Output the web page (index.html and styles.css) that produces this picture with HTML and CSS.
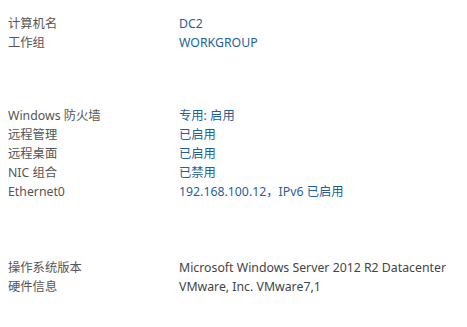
FILE: index.html
```html
<!DOCTYPE html>
<html lang="zh-CN">
  <head>
    <meta charset="UTF-8" />
    <title>属性</title>
    <link rel="stylesheet" href="styles.css">
  </head>
  <body>
    <div class="props">
      <div class="group">
        <div class="row"><span class="label">计算机名</span><span class="value link">DC2</span></div>
        <div class="row"><span class="label">工作组</span><span class="value link">WORKGROUP</span></div>
      </div>

      <div class="group group-net">
        <div class="row"><span class="label">Windows 防火墙</span><span class="value link">专用: 启用</span></div>
        <div class="row"><span class="label">远程管理</span><span class="value link">已启用</span></div>
        <div class="row"><span class="label">远程桌面</span><span class="value link">已启用</span></div>
        <div class="row"><span class="label">NIC 组合</span><span class="value link">已禁用</span></div>
        <div class="row"><span class="label">Ethernet0</span><span class="value link">192.168.100.12，IPv6 已启用</span></div>
      </div>

      <div class="group">
        <div class="row"><span class="label">操作系统版本</span><span class="value">Microsoft Windows Server 2012 R2 Datacenter</span></div>
        <div class="row"><span class="label">硬件信息</span><span class="value">VMware, Inc. VMware7,1</span></div>
      </div>
    </div>
  </body>
</html>
```

FILE: styles.css
```css
body {
  margin: 0;
  background-color: #ffffff;
  font-family: "Noto Sans", "Noto Sans CJK SC", sans-serif;
  font-size: 12.3px;
  color: #555555;
}
.props {
  padding: 14px 0 0 8px;
}
.group {
  margin-bottom: 54px;
}
.group-net {
  margin-bottom: 57px;
}
.group:last-child {
  margin-bottom: 0;
}
.row {
  display: flex;
  height: 19px;
  line-height: 19px;
}
.label {
  width: 171px;
  flex-shrink: 0;
}
.value {
  color: #444444;
}
.link {
  color: #1f5f99;
}
```
